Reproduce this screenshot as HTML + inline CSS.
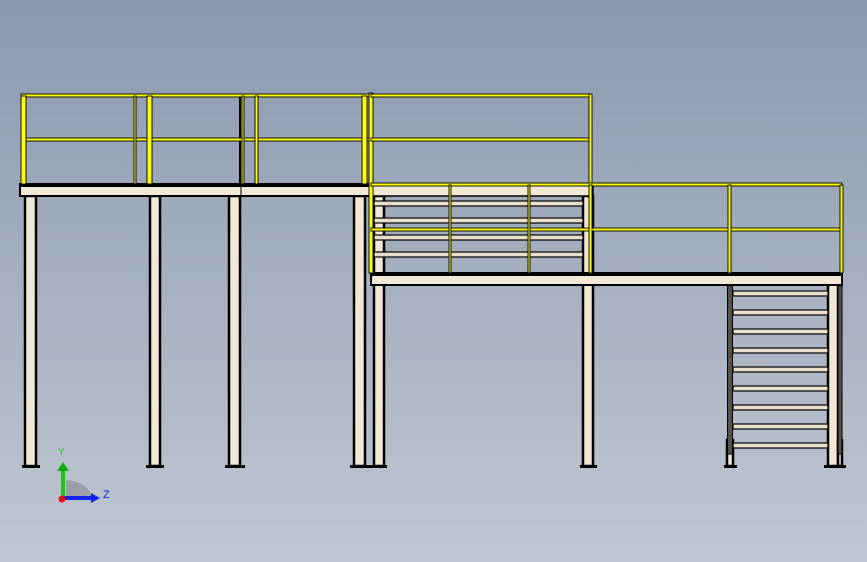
<!DOCTYPE html>
<html><head><style>
html,body{margin:0;padding:0;width:867px;height:562px;overflow:hidden}
body{background:linear-gradient(#8a99ae,#c1c7d3)}
svg{position:absolute;left:0;top:0}
</style></head><body>
<svg width="867" height="562" viewBox="0 0 867 562">
<defs>
<linearGradient id="bg" x1="0" y1="0" x2="0" y2="1"><stop offset="0" stop-color="#8a99ae"/><stop offset="1" stop-color="#c1c7d3"/></linearGradient>
</defs>
<rect width="867" height="562" fill="url(#bg)"/>
<g stroke="#000" stroke-width="2.5" fill="#f2e8d6">
<rect x="25" y="196" width="11" height="270"/>
<rect x="150" y="196" width="10" height="270"/>
<rect x="229" y="196" width="11" height="270"/>
<rect x="354" y="196" width="11" height="270"/>
<rect x="374" y="196" width="10" height="270"/>
<rect x="583" y="196" width="10" height="270"/>
<rect x="828" y="284" width="10" height="182"/>
<rect x="727" y="440" width="6" height="26"/>
<rect x="838" y="440" width="4" height="26"/>
</g>
<g fill="#000">
<rect x="22" y="465" width="18" height="3"/><rect x="146" y="465" width="18" height="3"/>
<rect x="225" y="465" width="20" height="3"/><rect x="350" y="465" width="37" height="3"/>
<rect x="580" y="465" width="17" height="3"/><rect x="724" y="465" width="13" height="3"/>
<rect x="824" y="465" width="22" height="3"/>
<rect x="239" y="95" width="2" height="100"/>
</g>
<rect x="727.5" y="286" width="5" height="168" fill="#55524a" stroke="#000"/>
<rect x="838" y="286" width="4" height="168" fill="#55524a" stroke="#000"/>
<g fill="#e8dfcc" stroke="#000" stroke-width="1.2">
<rect x="733" y="291" width="95" height="5"/><rect x="733" y="310" width="95" height="5"/>
<rect x="733" y="329" width="95" height="5"/><rect x="733" y="348" width="95" height="5"/>
<rect x="733" y="367" width="95" height="5"/><rect x="733" y="386" width="95" height="5"/>
<rect x="733" y="405" width="95" height="5"/><rect x="733" y="424" width="95" height="5"/>
<rect x="733" y="443" width="95" height="5"/>
<rect x="374" y="201" width="209" height="5"/><rect x="374" y="218" width="209" height="5"/>
<rect x="374" y="235" width="209" height="5"/><rect x="374" y="252" width="209" height="5"/>
</g>
<rect x="20" y="184" width="350" height="12" fill="#f2e8d6" stroke="#000" stroke-width="2"/>
<rect x="20" y="184" width="350" height="3" fill="#000"/>
<line x1="241" y1="184" x2="241" y2="196" stroke="#000"/>
<rect x="371" y="185" width="222" height="11" fill="#f2e8d6" stroke="#000" stroke-width="1.5"/>
<rect x="371" y="273" width="471" height="12" fill="#f2e8d6" stroke="#000" stroke-width="2"/>
<rect x="371" y="273" width="471" height="3" fill="#000"/>
<g fill="#ffff00" stroke="#111" stroke-width="1">
<rect x="21" y="94" width="350" height="3"/>
<rect x="21" y="138" width="350" height="3"/>
<rect x="21" y="96" width="5" height="88"/>
<rect x="134" y="96" width="2" height="88"/>
<rect x="147" y="96" width="5" height="88"/>
<rect x="242" y="96" width="2" height="88"/>
<rect x="255" y="96" width="3" height="88"/>
<rect x="362" y="96" width="5" height="88"/>
<rect x="369" y="93" width="4" height="180"/>
<rect x="371" y="94" width="219" height="3"/>
<rect x="371" y="138" width="219" height="3"/>
<rect x="589" y="94" width="3" height="90"/>
<rect x="371" y="183" width="471" height="3"/>
<rect x="371" y="228" width="471" height="3"/>
<rect x="449" y="185" width="2" height="88"/>
<rect x="528" y="185" width="2" height="88"/>
<rect x="589" y="185" width="3" height="88"/>
<rect x="728" y="185" width="3" height="88"/>
<rect x="840" y="185" width="3" height="88"/>
</g>
<path d="M66 500 L66 480 Q90 482 92 500 Z" fill="#9a9ea6"/>
<rect x="61" y="470" width="4" height="30" fill="#11cc11"/>
<polygon points="57,471 69,471 63,462" fill="#11aa11"/>
<rect x="62" y="496" width="30" height="4" fill="#1122ee"/>
<polygon points="91,493 91,503 100,498" fill="#1122ee"/>
<circle cx="62" cy="499" r="3.5" fill="#e01010"/>
<text x="58" y="455" font-family="Liberation Sans,sans-serif" font-size="10" fill="#11cc11">Y</text>
<text x="103" y="498" font-family="Liberation Sans,sans-serif" font-size="11" fill="#1122ee">Z</text>
</svg>
</body></html>
